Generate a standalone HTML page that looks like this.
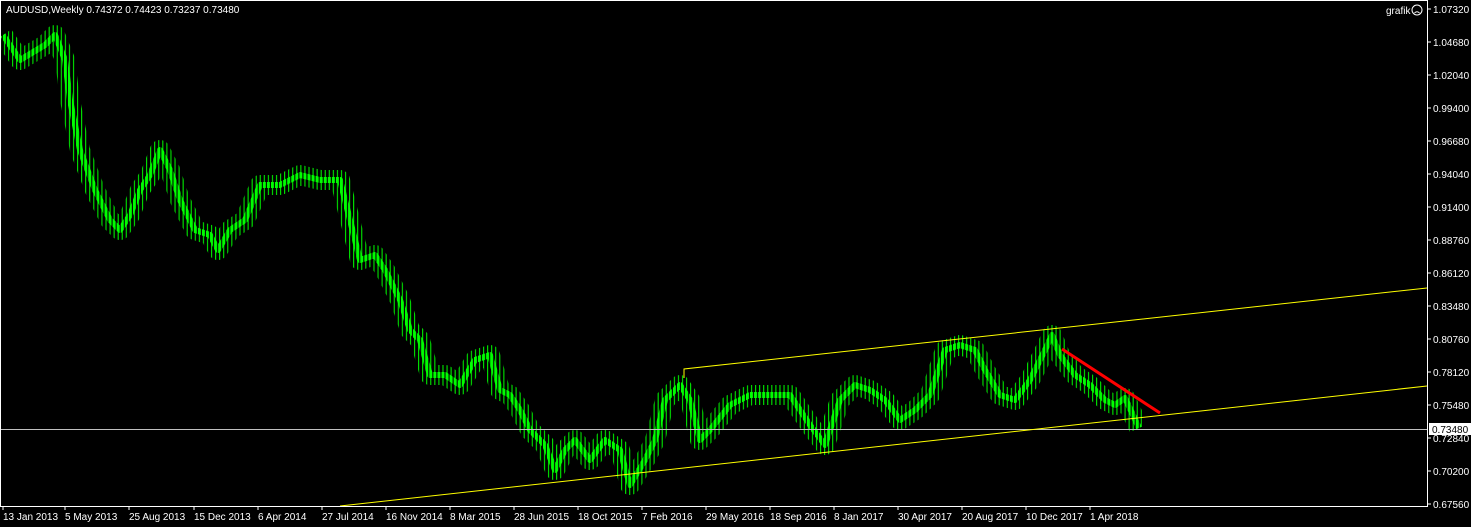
<!DOCTYPE html>
<html><head><meta charset="utf-8"><style>
html,body{margin:0;padding:0;background:#000;width:1471px;height:527px;overflow:hidden}
svg{display:block}
text{font-family:"Liberation Sans",sans-serif;font-size:10px;fill:#fff}
</style></head><body>
<svg width="1471" height="527" xmlns="http://www.w3.org/2000/svg">
<defs>
<pattern id="wk" patternUnits="userSpaceOnUse" x="3" y="0" width="4.06" height="10">
<rect x="1" y="0" width="1" height="10" fill="#00ff00"/>
</pattern>
<pattern id="bd" patternUnits="userSpaceOnUse" x="3" y="0" width="4.06" height="10">
<rect x="0" y="0" width="3" height="10" fill="#00ff00"/>
</pattern>
<clipPath id="cl"><rect x="0" y="0" width="1142" height="507"/></clipPath>
</defs>
<rect width="1471" height="527" fill="#000"/>
<g clip-path="url(#cl)" fill="none" stroke-linejoin="round">
<polyline stroke="url(#wk)" stroke-width="20" points="3,35 20,60 45,45 55,35 65,60 70,100 80,150 95,190 110,220 120,230 130,215 140,190 150,175 160,150 170,170 180,200 195,230 210,235 218,250 230,230 245,220 260,185 280,185 300,175 320,180 340,180 350,220 360,260 375,255 385,270 400,300 410,330 420,340 430,375 445,375 460,385 475,360 490,355 500,390 510,395 520,410 530,430 545,445 555,470 565,450 575,440 590,460 605,440 620,450 630,485 645,460 655,440 665,400 680,385 690,400 700,440 710,430 730,405 750,395 770,395 790,395 800,410 810,425 825,445 840,400 855,385 870,390 885,400 900,420 915,410 930,395 945,350 960,345 975,350 985,370 1000,395 1015,400 1030,380 1045,350 1052,335 1060,355 1075,375 1090,385 1105,400 1115,405 1125,398 1133,415 1139,428"/>
<polyline stroke="url(#bd)" stroke-width="6" points="3,35 20,60 45,45 55,35 65,60 70,100 80,150 95,190 110,220 120,230 130,215 140,190 150,175 160,150 170,170 180,200 195,230 210,235 218,250 230,230 245,220 260,185 280,185 300,175 320,180 340,180 350,220 360,260 375,255 385,270 400,300 410,330 420,340 430,375 445,375 460,385 475,360 490,355 500,390 510,395 520,410 530,430 545,445 555,470 565,450 575,440 590,460 605,440 620,450 630,485 645,460 655,440 665,400 680,385 690,400 700,440 710,430 730,405 750,395 770,395 790,395 800,410 810,425 825,445 840,400 855,385 870,390 885,400 900,420 915,410 930,395 945,350 960,345 975,350 985,370 1000,395 1015,400 1030,380 1045,350 1052,335 1060,355 1075,375 1090,385 1105,400 1115,405 1125,398 1133,415 1139,428"/>
</g>
<line x1="0" y1="429.5" x2="1427" y2="429.5" stroke="#c0c0c0" stroke-width="1"/>
<polyline points="684,378 684,369 1427,288" fill="none" stroke="#ffff00" stroke-width="1"/>
<line x1="340" y1="506" x2="1427" y2="386" stroke="#ffff00" stroke-width="1"/>
<line x1="1062" y1="349" x2="1160" y2="413" stroke="#ff0000" stroke-width="3"/>
<rect x="0.5" y="0.5" width="1427" height="506" fill="none" stroke="#fff"/>
<text x="6" y="13">AUDUSD,Weekly  0.74372 0.74423 0.73237 0.73480</text>
<text x="1386" y="14">grafik</text>
<circle cx="1417" cy="10" r="5" fill="none" stroke="#fff"/>
<path d="M1414.5 13 Q1417 10.5 1419.5 13" fill="none" stroke="#fff"/>
<g stroke="#fff">
<line x1="1427" y1="9" x2="1431" y2="9"/><line x1="1427" y1="42" x2="1431" y2="42"/><line x1="1427" y1="75" x2="1431" y2="75"/><line x1="1427" y1="108" x2="1431" y2="108"/><line x1="1427" y1="141" x2="1431" y2="141"/><line x1="1427" y1="174" x2="1431" y2="174"/><line x1="1427" y1="207" x2="1431" y2="207"/><line x1="1427" y1="240" x2="1431" y2="240"/><line x1="1427" y1="273" x2="1431" y2="273"/><line x1="1427" y1="306" x2="1431" y2="306"/><line x1="1427" y1="339" x2="1431" y2="339"/><line x1="1427" y1="372" x2="1431" y2="372"/><line x1="1427" y1="405" x2="1431" y2="405"/><line x1="1427" y1="438" x2="1431" y2="438"/><line x1="1427" y1="471" x2="1431" y2="471"/><line x1="1427" y1="504" x2="1431" y2="504"/>
<line x1="3" y1="506" x2="3" y2="510"/><line x1="65" y1="506" x2="65" y2="510"/><line x1="129" y1="506" x2="129" y2="510"/><line x1="194" y1="506" x2="194" y2="510"/><line x1="258" y1="506" x2="258" y2="510"/><line x1="322" y1="506" x2="322" y2="510"/><line x1="386" y1="506" x2="386" y2="510"/><line x1="450" y1="506" x2="450" y2="510"/><line x1="514" y1="506" x2="514" y2="510"/><line x1="578" y1="506" x2="578" y2="510"/><line x1="642" y1="506" x2="642" y2="510"/><line x1="706" y1="506" x2="706" y2="510"/><line x1="770" y1="506" x2="770" y2="510"/><line x1="834" y1="506" x2="834" y2="510"/><line x1="898" y1="506" x2="898" y2="510"/><line x1="962" y1="506" x2="962" y2="510"/><line x1="1026" y1="506" x2="1026" y2="510"/><line x1="1090" y1="506" x2="1090" y2="510"/>
</g>
<text x="1433" y="13">1.07320</text><text x="1433" y="46">1.04680</text><text x="1433" y="79">1.02040</text><text x="1433" y="112">0.99400</text><text x="1433" y="145">0.96680</text><text x="1433" y="178">0.94040</text><text x="1433" y="211">0.91400</text><text x="1433" y="244">0.88760</text><text x="1433" y="277">0.86120</text><text x="1433" y="310">0.83480</text><text x="1433" y="343">0.80760</text><text x="1433" y="376">0.78120</text><text x="1433" y="409">0.75480</text><text x="1433" y="442">0.72840</text><text x="1433" y="475">0.70200</text><text x="1433" y="508">0.67560</text>
<text x="3" y="520">13 Jan 2013</text><text x="65" y="520">5 May 2013</text><text x="129" y="520">25 Aug 2013</text><text x="194" y="520">15 Dec 2013</text><text x="258" y="520">6 Apr 2014</text><text x="322" y="520">27 Jul 2014</text><text x="386" y="520">16 Nov 2014</text><text x="450" y="520">8 Mar 2015</text><text x="514" y="520">28 Jun 2015</text><text x="578" y="520">18 Oct 2015</text><text x="642" y="520">7 Feb 2016</text><text x="706" y="520">29 May 2016</text><text x="770" y="520">18 Sep 2016</text><text x="834" y="520">8 Jan 2017</text><text x="898" y="520">30 Apr 2017</text><text x="962" y="520">20 Aug 2017</text><text x="1026" y="520">10 Dec 2017</text><text x="1090" y="520">1 Apr 2018</text>
<rect x="1429" y="423" width="42" height="12" fill="#fff"/>
<text x="1432" y="433" style="fill:#000">0.73480</text>
</svg>
</body></html>
